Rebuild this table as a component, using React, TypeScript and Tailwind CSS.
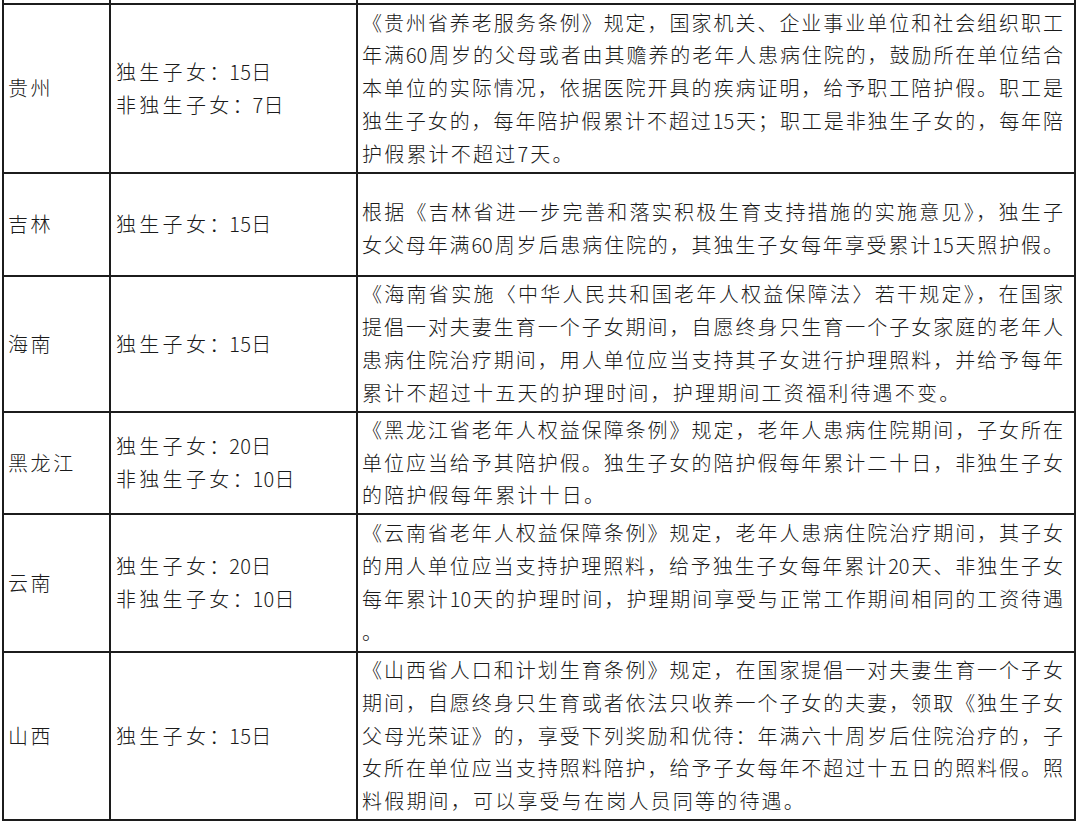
import React from "react";

type Row = {
  name: string;
  days: string[];
  lines: string[];
  last?: string;
  h: number;
  pt?: string;
};

const rows: Row[] = [
  {
    name: "贵州",
    days: ["独生子女：15日", "非独生子女：7日"],
    lines: [
      "《贵州省养老服务条例》规定，国家机关、企业事业单位和社会组织职工",
      "年满60周岁的父母或者由其赡养的老年人患病住院的，鼓励所在单位结合",
      "本单位的实际情况，依据医院开具的疾病证明，给予职工陪护假。职工是",
      "独生子女的，每年陪护假累计不超过15天；职工是非独生子女的，每年陪",
    ],
    last: "护假累计不超过7天。",
    h: 169,
  },
  {
    name: "吉林",
    days: ["独生子女：15日"],
    lines: [
      "根据《吉林省进一步完善和落实积极生育支持措施的实施意见》，独生子",
      "女父母年满60周岁后患病住院的，其独生子女每年享受累计15天照护假。",
    ],
    h: 103,
    pt: "pt-[8px]",
  },
  {
    name: "海南",
    days: ["独生子女：15日"],
    lines: [
      "《海南省实施〈中华人民共和国老年人权益保障法〉若干规定》，在国家",
      "提倡一对夫妻生育一个子女期间，自愿终身只生育一个子女家庭的老年人",
      "患病住院治疗期间，用人单位应当支持其子女进行护理照料，并给予每年",
    ],
    last: "累计不超过十五天的护理时间，护理期间工资福利待遇不变。",
    h: 136,
  },
  {
    name: "黑龙江",
    days: ["独生子女：20日", "非独生子女：10日"],
    lines: [
      "《黑龙江省老年人权益保障条例》规定，老年人患病住院期间，子女所在",
      "单位应当给予其陪护假。独生子女的陪护假每年累计二十日，非独生子女",
    ],
    last: "的陪护假每年累计十日。",
    h: 102,
  },
  {
    name: "云南",
    days: ["独生子女：20日", "非独生子女：10日"],
    lines: [
      "《云南省老年人权益保障条例》规定，老年人患病住院治疗期间，其子女",
      "的用人单位应当支持护理照料，给予独生子女每年累计20天、非独生子女",
      "每年累计10天的护理时间，护理期间享受与正常工作期间相同的工资待遇",
    ],
    last: "。",
    h: 138,
  },
  {
    name: "山西",
    days: ["独生子女：15日"],
    lines: [
      "《山西省人口和计划生育条例》规定，在国家提倡一对夫妻生育一个子女",
      "期间，自愿终身只生育或者依法只收养一个子女的夫妻，领取《独生子女",
      "父母光荣证》的，享受下列奖励和优待：年满六十周岁后住院治疗的，子",
      "女所在单位应当支持照料陪护，给予子女每年不超过十五日的照料假。照",
    ],
    last: "料假期间，可以享受与在岗人员同等的待遇。",
    h: 168,
  },
];

function Days({ text }: { text: string }) {
  const [a, b] = text.split("：");
  const num = b.slice(0, -1);
  return (
    <div className="whitespace-nowrap">
      <span className="tracking-[3.3px]">{a}</span>
      <span className="tracking-[0px]">：</span>
      <span className="tracking-[0.3px]">{num}</span>
      <span>日</span>
    </div>
  );
}

export default function App() {
  return (
    <div
      className="w-[1080px] h-[822px] overflow-hidden bg-white text-[#1a1a1a] text-[20px] leading-[32.8px] font-light"
      style={{ fontFamily: '"Noto Sans CJK SC", "Noto Sans", sans-serif' }}
    >
      <div className="ml-[2px] w-[1074px] border-l-2 border-[#1c1c1c]">
        <div className="flex h-[5px] border-b-2 border-[#1c1c1c]">
          <div className="w-[107px] border-r-2 border-[#1c1c1c]" />
          <div className="w-[247px] border-r-2 border-[#1c1c1c]" />
          <div className="w-[718px] border-r-2 border-[#1c1c1c]" />
        </div>
        {rows.map((r) => (
          <div
            key={r.name}
            className="flex border-b-2 border-[#1c1c1c]"
            style={{ height: r.h }}
          >
            <div className="w-[107px] shrink-0 border-r-2 border-[#1c1c1c] pl-[4px] flex items-center tracking-[2.6px] whitespace-nowrap">
              {r.name}
            </div>
            <div className="w-[247px] shrink-0 border-r-2 border-[#1c1c1c] pl-[5px] flex flex-col justify-center">
              {r.days.map((d) => (
                <Days key={d} text={d} />
              ))}
            </div>
            <div
              className={`w-[718px] shrink-0 border-r-2 border-[#1c1c1c] pl-[4px] pr-[11px] flex flex-col justify-center ${r.pt ?? ""}`}
            >
              {r.lines.map((l) => (
                <div key={l} className="text-justify [text-align-last:justify] whitespace-nowrap">
                  {l}
                </div>
              ))}
              {r.last && (
                <div className="tracking-[2.2px] whitespace-nowrap">{r.last}</div>
              )}
            </div>
          </div>
        ))}
      </div>
    </div>
  );
}
